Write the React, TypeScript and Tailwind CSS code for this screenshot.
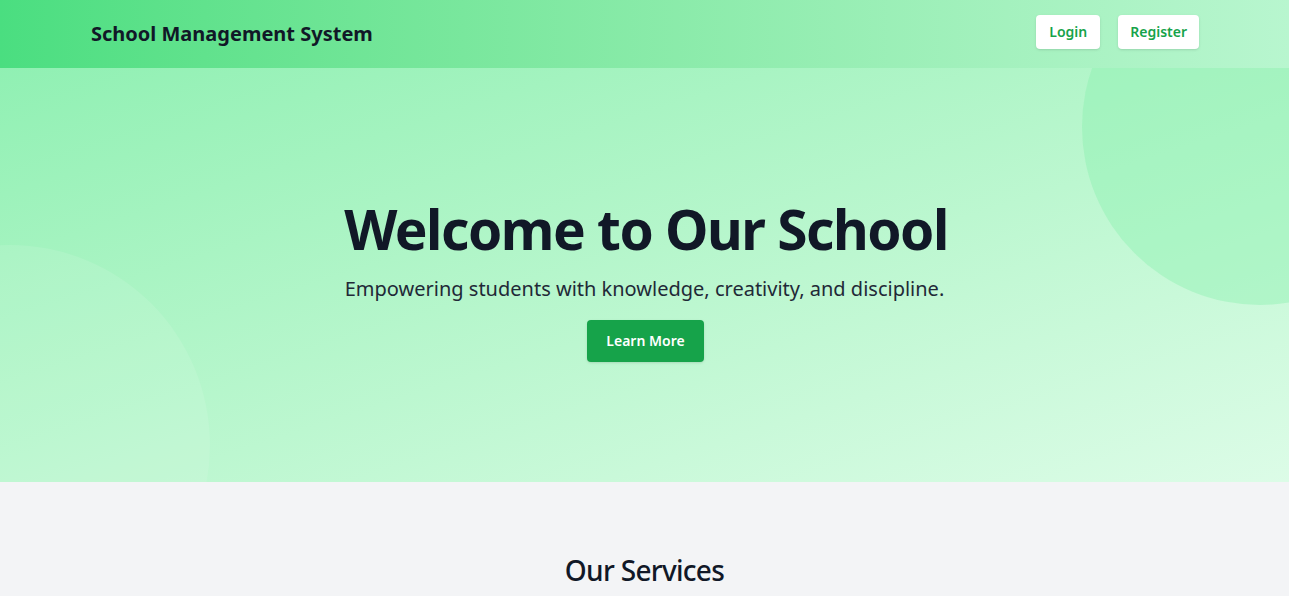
import React from 'react';

const font = { fontFamily: '"Noto Sans", "Open Sans", sans-serif' };

const Navbar = () => (
  <nav className="relative z-20 bg-gradient-to-r from-[#4ade80] to-[#b8f6cf]">
    <div className="mx-auto flex h-[68px] max-w-[1109px] items-center justify-between">
      <h1 className="ml-px text-[20px] font-bold text-[#111827]">School Management System</h1>
      <div className="mb-1 flex items-center gap-[18px]">
        <button className="rounded bg-white px-[13px] py-[7px] text-sm font-semibold text-[#16a34a] shadow">
          Login
        </button>
        <button className="rounded bg-white px-[12px] py-[7px] text-sm font-semibold text-[#16a34a] shadow">
          Register
        </button>
      </div>
    </div>
  </nav>
);

const Hero = () => (
  <section className="relative overflow-hidden bg-gradient-to-br from-[#90f0b3] to-[#dcfce7] pt-[131px] pb-[120px]">
    {/* decorative blobs */}
    <div className="absolute top-[-119px] left-[1082px] h-[356px] w-[356px] rounded-full bg-[#86efac] opacity-40" />
    <div className="absolute top-[177px] left-[-190px] h-[400px] w-[400px] rounded-full bg-white opacity-10" />

    <div className="relative text-center">
      <h2 className="ml-[3px] text-[55px] leading-[60px] font-bold tracking-[-1.5px] text-[#111827]">Welcome to Our School</h2>
      <p className="mt-4 text-xl text-[#1f2937]">
        Empowering students with knowledge, creativity, and discipline.
      </p>
      <button className="mt-[17px] ml-[2px] rounded bg-[#16a34a] px-[19px] py-[11px] text-sm font-semibold text-white shadow">
        Learn More
      </button>
    </div>
  </section>
);

const Services = () => (
  <section className="bg-gray-100 pt-[67px] pb-10">
    <h2 className="text-center text-[28px] font-medium tracking-[-0.7px] text-[#111827]">Our Services</h2>
  </section>
);

export default function App() {
  return (
    <div className="min-h-screen bg-gray-100" style={font}>
      <Navbar />
      <Hero />
      <Services />
    </div>
  );
}
